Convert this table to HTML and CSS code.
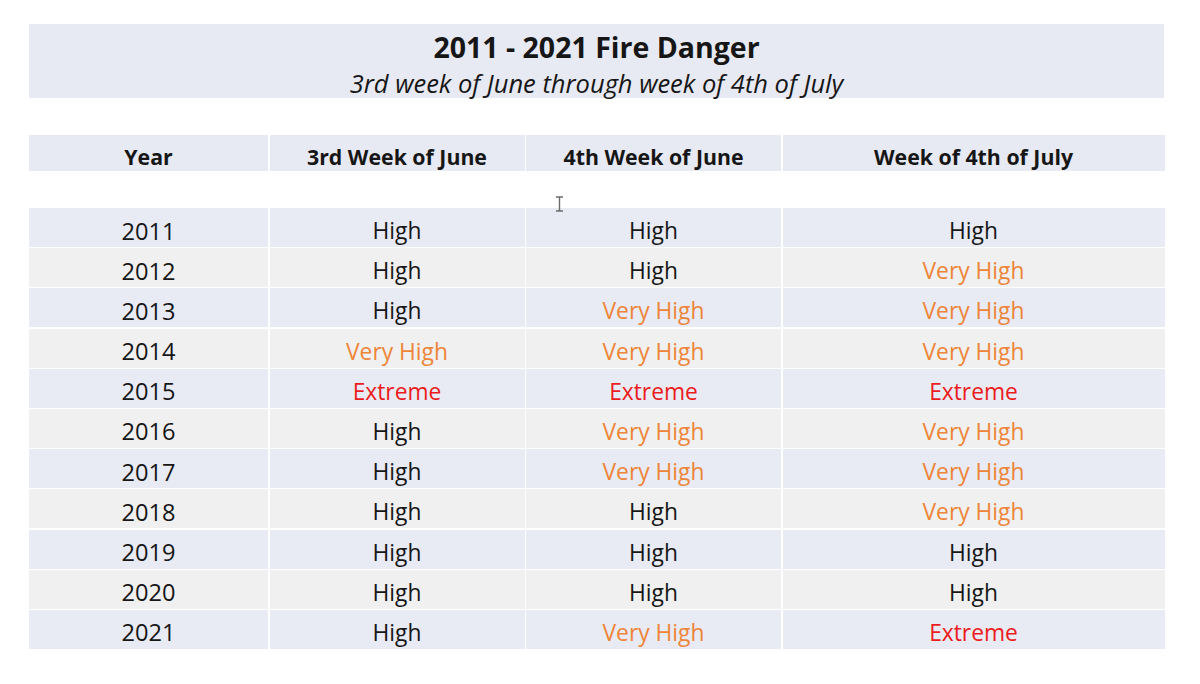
FILE: index.html
```html
<!DOCTYPE html>
<html>
<head>
<meta charset="utf-8">
<link rel="stylesheet" href="styles.css">
</head>
<body>
<div class="page">
  <div class="title-box">
    <div class="title">2011 - 2021 Fire Danger</div>
    <div class="subtitle">3rd week of June through week of 4th of July</div>
  </div>
  <div class="header grid">
    <div class="cell">Year</div>
    <div class="cell">3rd Week of June</div>
    <div class="cell">4th Week of June</div>
    <div class="cell">Week of 4th of July</div>
  </div>
  <div class="body grid">
    <div class="cell a yr">2011</div><div class="cell a">High</div><div class="cell a">High</div><div class="cell a">High</div>
    <div class="cell b yr">2012</div><div class="cell b">High</div><div class="cell b">High</div><div class="cell b vh">Very High</div>
    <div class="cell a yr">2013</div><div class="cell a">High</div><div class="cell a vh">Very High</div><div class="cell a vh">Very High</div>
    <div class="cell b yr">2014</div><div class="cell b vh">Very High</div><div class="cell b vh">Very High</div><div class="cell b vh">Very High</div>
    <div class="cell a yr">2015</div><div class="cell a ex">Extreme</div><div class="cell a ex">Extreme</div><div class="cell a ex">Extreme</div>
    <div class="cell b yr">2016</div><div class="cell b">High</div><div class="cell b vh">Very High</div><div class="cell b vh">Very High</div>
    <div class="cell a yr">2017</div><div class="cell a">High</div><div class="cell a vh">Very High</div><div class="cell a vh">Very High</div>
    <div class="cell b yr">2018</div><div class="cell b">High</div><div class="cell b">High</div><div class="cell b vh">Very High</div>
    <div class="cell a yr">2019</div><div class="cell a">High</div><div class="cell a">High</div><div class="cell a">High</div>
    <div class="cell b yr">2020</div><div class="cell b">High</div><div class="cell b">High</div><div class="cell b">High</div>
    <div class="cell a yr">2021</div><div class="cell a">High</div><div class="cell a vh">Very High</div><div class="cell a ex">Extreme</div>
  </div>
  <svg class="cursor" width="9" height="16" viewBox="0 0 9 16"><path d="M1 1h7M1 15h7M4.5 1v14" stroke="#6b6b6b" stroke-width="1.4" fill="none"/></svg>
</div>
</body>
</html>
```
FILE: styles.css
```css
html, body {
  margin: 0;
  padding: 0;
  background: #ffffff;
}
body {
  font-family: "Open Sans", "Noto Sans", sans-serif;
  color: #161616;
}
.page {
  position: relative;
  width: 1135px;
  margin-left: 29px;
  padding-top: 24px;
}
.title-box {
  background: #e8eaf3;
  height: 74px;
  box-sizing: border-box;
  padding-top: 6px;
  display: flex;
  flex-direction: column;
  align-items: center;
}
.title {
  font-weight: 700;
  font-size: 28.5px;
  line-height: 34px;
}
.subtitle {
  font-style: italic;
  font-size: 25.5px;
  line-height: 28px;
  margin-top: 5px;
}
.grid {
  display: grid;
  grid-template-columns: 239px 255px 255px 382px;
  column-gap: 1.5px;
}
.header {
  margin-top: 37px;
  height: 36px;
}
.header .cell {
  background: #e8eaf3;
  font-weight: 700;
  font-size: 21.3px;
  padding-top: 6px;
}
.body {
  margin-top: 37px;
  grid-auto-rows: 39px;
  row-gap: 1.2px;
}
.cell {
  display: flex;
  align-items: center;
  justify-content: center;
  font-size: 22.8px;
  padding-top: 6px;
  box-sizing: border-box;
}
.yr {
  font-size: 23.6px;
}
.a {
  background: #e8eaf4;
}
.b {
  background: #f0f0f0;
}
.vh {
  color: #ee8538;
}
.ex {
  color: #ec1c1c;
}
.cursor {
  position: absolute;
  left: 526px;
  top: 196px;
}
```
